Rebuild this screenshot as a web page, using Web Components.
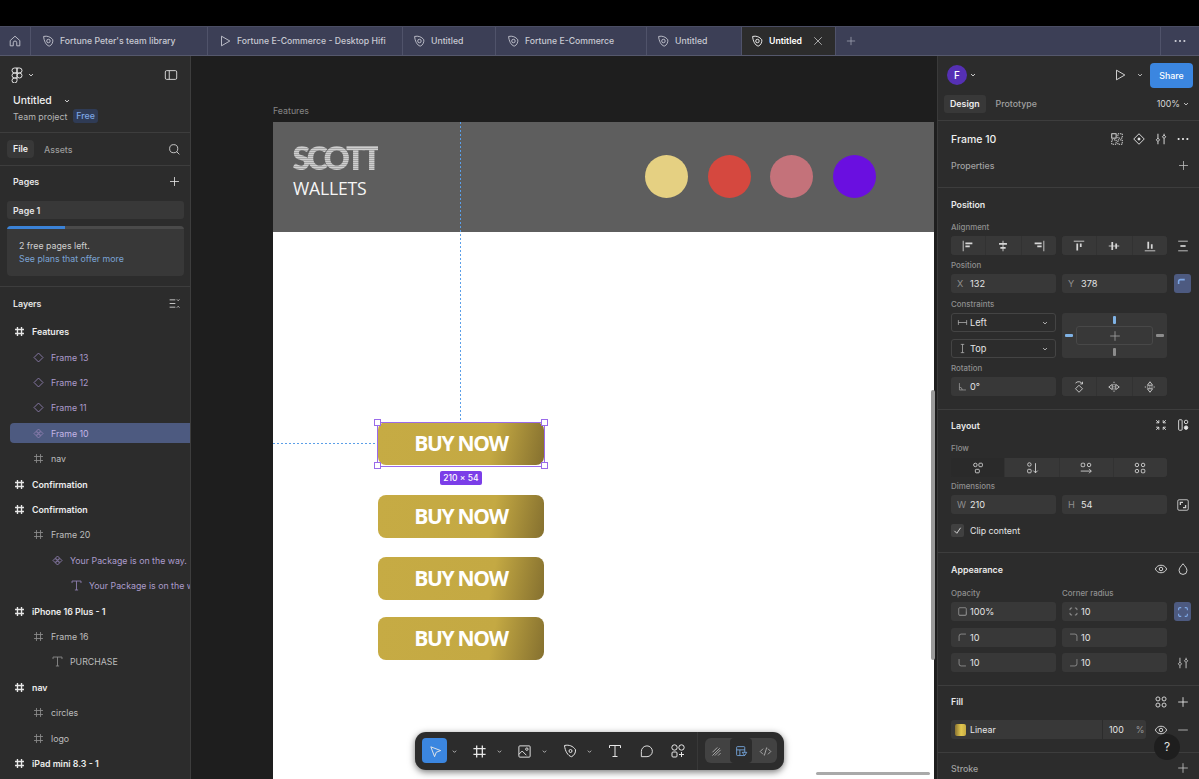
<!DOCTYPE html>
<html>
<head>
<meta charset="utf-8">
<title>Untitled</title>
<style>
    html, body { margin: 0; height: 100%; background: #000; overflow: hidden; }
    body { font-family: Inter, "Liberation Sans", sans-serif; font-size: 8.8px; color: #e6e6e6; }
    fig-app { height: 100vh; }
</style>
</head>
<body>
<fig-app></fig-app>

<script>
const ICONS = {
    home: '<path d="M2.500 7.500 8 2.500l5.500 5V13.500H10V10a2 2 0 0 0-4 0v3.500H2.500z"/>',
    draft: '<path d="M3 2.800c4-1 8 .4 10.500 3.700.5 3-1.500 6.700-4 7.300C5.800 13.300 3.300 7.500 3 2.800z"/><circle cx="8.500" cy="8" r="2"/>',
    play: '<path d="M4 2.500 13.500 8 4 13.500z" stroke-linejoin="round"/>',
    plus: '<path d="M8 2.500v11M2.500 8h11"/>',
    x: '<path d="M3 3l10 10M13 3 3 13"/>',
    dots: '<g fill="currentColor" stroke="none"><circle cx="3" cy="8" r="1.200"/><circle cx="8" cy="8" r="1.200"/><circle cx="13" cy="8" r="1.200"/></g>',
    logo: '<path d="M8 1H5.500a2.500 2.500 0 0 0 0 5H8zM8 1h2.500a2.500 2.500 0 0 1 0 5H8zM8 6H5.500a2.500 2.500 0 0 0 0 5H8z"/><circle cx="10.500" cy="8.500" r="2.500"/><path d="M5.500 11H8v2.500A2.500 2.500 0 1 1 5.500 11z"/>',
    panel: '<rect x="1.500" y="3" width="13" height="10" rx="1.500"/><path d="M6 3v10"/>',
    chev: '<path d="M5 6.500 8 9.500l3-3" stroke-width="1.500"/>',
    search: '<circle cx="7" cy="7" r="5"/><path d="M10.700 10.700 14 14"/>',
    collapse: '<path d="M2 3.500h7M2 8h7M2 12.500h7M11 3l1.500 1.500L14 3M11 13l1.500-1.500L14 13"/>',
    hash: '<path d="M5.500 2.500v11M10.500 2.500v11M2.500 5.500h11M2.500 10.500h11"/>',
    diamond: '<path d="M8 2.500 13.500 8 8 13.500 2.500 8z"/>',
    inst: '<path d="M8 2.500 10.500 5 8 7.500 5.500 5zM5 5.500 7.500 8 5 10.500 2.500 8zM11 5.500 13.500 8 11 10.500 8.500 8zM8 8.500l2.500 2.500L8 13.500 5.500 11z"/>',
    text: '<path d="M2.500 5V2.500h11V5M8 2.500v11M6 13.500h4"/>',
    compset: '<rect x="2" y="2" width="5" height="5"/><path stroke-dasharray="1.500 1" d="M9 2h5v5H9zM2 9h5v5H2zM9 9h5v5H9z"/>',
    diadot: '<path d="M8 2 14 8 8 14 2 8z"/><circle cx="8" cy="8" r="1.200" fill="currentColor"/>',
    sliders: '<path d="M4.500 2v5M4.500 11v3M11.500 2v1.500M11.500 7.500V14"/><path d="M4.500 7 6.300 9 4.500 11 2.700 9zM11.500 3.500l1.800 2-1.800 2-1.800-2z"/>',
    al: '<path d="M2.500 2v12"/><path d="M5 5h8M5 8.500h5" stroke-width="2"/>',
    ac: '<path d="M8 2v12"/><path d="M3.500 5.500h9M5 10h6" stroke-width="2"/>',
    ar: '<path d="M13.500 2v12"/><path d="M3 5h8M6 8.500h5" stroke-width="2"/>',
    at: '<path d="M2 2.500h12"/><path d="M6 5v8M10 5v4" stroke-width="2"/>',
    am: '<path d="M2 8h12"/><path d="M6 3.500v9M10.500 5v6" stroke-width="2"/>',
    ab: '<path d="M2 13.500h12"/><path d="M6 3v8M10 6v5" stroke-width="2"/>',
    dist: '<path d="M2.500 2.500h11M2.500 13.500h11"/><path d="M5 8h6" stroke-width="2"/>',
    corner: '<path d="M3 8V5a2 2 0 0 1 2-2h5" stroke-width="1.800"/>',
    width: '<path d="M2 4.500v7M14 4.500v7M2 8h12"/>',
    height: '<path d="M5.500 2h5M5.500 14h5M8 2v12"/>',
    angle: '<path d="M3.500 3v10H13M3.500 9a4 4 0 0 1 4 4"/>',
    rot: '<path d="M4 3.500a5 5 0 0 1 8 1M12 2v2.500H9.500"/><path d="M8 6.500 12 10.500 8 14.500 4 10.500z" transform="translate(0 -.5)"/>',
    fliph: '<path d="M8 2v12" stroke-dasharray="1.500 1"/><path d="M6 5v6L2 8zM10 5v6l4-3z"/>',
    flipv: '<path d="M2 8h12" stroke-dasharray="1.500 1"/><path d="M5 6h6L8 2zM5 10h6l-3 4z"/>',
    fit: '<path d="M2.500 5.500h3v-3M13.500 5.500h-3v-3M2.500 10.500h3v3M13.500 10.500h-3v3M2.500 2.500l3 3M13.500 2.500l-3 3M2.500 13.500l3-3M13.500 13.500l-3-3"/>',
    autol: '<rect x="3" y="2" width="4" height="12" rx="1"/><circle cx="11.500" cy="4.500" r="2"/><circle cx="11.500" cy="11" r="2" fill="currentColor"/>',
    fl1: '<circle cx="5" cy="4.500" r="2"/><rect x="9" y="2.500" width="4" height="4" rx="1"/><rect x="5" y="9.500" width="4.500" height="4" rx="1"/>',
    fl2: '<circle cx="5" cy="4" r="2"/><rect x="3" y="9.500" width="4" height="4" rx="1"/><path d="M12 2.500v11M9.500 11l2.500 2.500 2.500-2.500"/>',
    fl3: '<rect x="2.500" y="2.500" width="4" height="4" rx="1"/><circle cx="11.500" cy="4.500" r="2"/><path d="M2 11.500h12M11.500 9l2.500 2.500-2.500 2.500"/>',
    fl4: '<circle cx="4.500" cy="4.500" r="2"/><circle cx="11.500" cy="4.500" r="2"/><circle cx="4.500" cy="11.500" r="2"/><rect x="9.500" y="9.500" width="4" height="4" rx="1"/>',
    resize: '<rect x="2" y="2" width="12" height="12" rx="1.500"/><path d="M5 8V5h3M11 8v3H8" stroke-width="1.500"/>',
    check: '<path d="M3.500 8.500 7 12l5.500-8" stroke-width="1.300"/>',
    eye: '<path d="M1.500 8C3 5 5.300 3.700 8 3.700S13 5 14.500 8C13 11 10.700 12.300 8 12.300S3 11 1.500 8z"/><circle cx="8" cy="8" r="2"/>',
    drop: '<path d="M8 2c2.500 3 4.500 5.200 4.500 7.700a4.500 4.500 0 0 1-9 0C3.500 7.200 5.500 5 8 2z"/>',
    opac: '<rect x="2.500" y="2.500" width="11" height="11" rx="1.500"/><path d="M2.500 13.500h11V8" opacity=".5"/>',
    radius: '<path d="M3 6V4.500A1.500 1.500 0 0 1 4.500 3H6M10 3h1.500A1.500 1.500 0 0 1 13 4.500V6M13 10v1.500a1.500 1.500 0 0 1-1.500 1.500H10M6 13H4.500A1.500 1.500 0 0 1 3 11.500V10" stroke-width="1.300"/>',
    rtl: '<path d="M3 13V6a3 3 0 0 1 3-3h7"/>',
    rtr: '<path d="M3 3h7a3 3 0 0 1 3 3v7"/>',
    rbl: '<path d="M3 3v7a3 3 0 0 0 3 3h7"/>',
    rbr: '<path d="M13 3v7a3 3 0 0 1-3 3H3"/>',
    style: '<circle cx="4.500" cy="4.500" r="2.300"/><circle cx="11.500" cy="4.500" r="2.300"/><circle cx="4.500" cy="11.500" r="2.300"/><circle cx="11.500" cy="11.500" r="2.300"/>',
    minus: '<path d="M2.500 8h11"/>',
    cursor: '<path d="M3 3l10.500 4-4.700 1.800L7 13.500z" stroke-linejoin="round"/>',
    frame: '<path d="M5 1.500v13M11 1.500v13M1.500 5h13M1.500 11h13" stroke-width="1.400"/>',
    image: '<rect x="2" y="2" width="12" height="12" rx="1"/><circle cx="10.500" cy="5.500" r="1.300"/><path d="M2 11l3.500-3.500L10 12"/>',
    pen: '<path d="M2.500 2.500c4.500-1 8.500.5 11 4.200.4 3-1.500 6-4 7C6 13 3 8 2.500 2.500z"/><circle cx="8.500" cy="8" r="1.500"/>',
    bigt: '<path d="M2.500 5V2.500h11V5M8 2.500v11M5.500 13.500h5"/>',
    bubble: '<path d="M8.500 2a5.700 5.700 0 0 1 0 11.500H2.500V8A6 6 0 0 1 8.500 2z" stroke-linejoin="round"/>',
    plugins: '<circle cx="4.500" cy="4.500" r="2.700"/><circle cx="11.500" cy="4.500" r="2.700"/><rect x="2" y="9" width="5" height="5" rx="1"/><path d="M11.500 9v5M9 11.500h5"/>',
    draw: '<path d="M3 9l6-6M3 13l9-9M6 13l7-7M10 13l3-3"/>',
    dev: '<rect x="2" y="2" width="10" height="11" rx="1"/><path d="M2 6h10M6 6v7"/><path d="M9 9h5.500l-2.700 4z" fill="#2c2c2c"/>',
    code: '<path d="M5 4.500 1.500 8 5 11.500M11 4.500 14.500 8 11 11.500M9.500 3 6.500 13"/>',
};

// small base class, renders into an open shadow root once attributes are known
class FigElement extends HTMLElement {
    connectedCallback() {
        if (this.shadowRoot) return;
        this.attachShadow({ mode: 'open' }).innerHTML = this.render();
    }
}

class FigIcon extends FigElement {
    render() {
        const s = this.getAttribute('s') || 14;
        const w = this.getAttribute('w') || 1;
        return `<style>:host{display:inline-flex;flex:none;width:${s}px;height:${s}px}svg{display:block}</style>
        <svg width="${s}" height="${s}" viewBox="0 0 16 16" fill="none" stroke="currentColor" stroke-width="${w}">${ICONS[this.getAttribute('n')] || ''}</svg>`;
    }
}
customElements.define('fig-icon', FigIcon);

class FigTab extends FigElement {
    render() {
        const active = this.hasAttribute('active');
        return `<style>
            :host{display:flex;align-items:center;height:100%;box-sizing:border-box;padding-left:${this.getAttribute('pad') || 9}px;width:${this.getAttribute('width')}px;border-right:1px solid #50536a;color:#c9cad3;font-weight:500;gap:5px;flex:none}
            :host([active]){background:#2c2c2c;color:#fff;font-weight:600}
            .x{margin-left:5px;color:#d0d0d0}
            span{white-space:nowrap}
        </style>
        <fig-icon n="${this.getAttribute('icon')}" s="14"></fig-icon><span><slot></slot></span>
        ${active ? '<fig-icon class="x" n="x" s="12"></fig-icon>' : ''}`;
    }
}
customElements.define('fig-tab', FigTab);

class FigTabbar extends FigElement {
    render() {
        return `<style>
            :host{display:flex;height:30px;box-sizing:border-box;background:#3c3f56;border-top:1px solid #4a4d63;border-bottom:1px solid #55586c;font-size:8.7px}
            .home{width:31px;box-sizing:border-box;display:flex;align-items:center;justify-content:center;color:#c9cad3;border-right:1px solid #50536a}
            .add{width:30px;display:flex;align-items:center;justify-content:center;color:#a3a5b4}
            .fill{flex:1}
            .more{width:38px;display:flex;align-items:center;justify-content:center;border-left:1px solid #50536a;color:#d0d1da}
        </style>
        <div class="home"><fig-icon n="home" s="14"></fig-icon></div>
        <fig-tab icon="draft" width="177" pad="10">Fortune Peter's team library</fig-tab>
        <fig-tab icon="play" width="195" pad="10">Fortune E-Commerce - Desktop Hifi</fig-tab>
        <fig-tab icon="draft" width="93" pad="9">Untitled</fig-tab>
        <fig-tab icon="draft" width="151" pad="10">Fortune E-Commerce</fig-tab>
        <fig-tab icon="draft" width="95" pad="9">Untitled</fig-tab>
        <fig-tab icon="draft" width="94" pad="8" active>Untitled</fig-tab>
        <div class="add"><fig-icon n="plus" s="12"></fig-icon></div>
        <div class="fill"></div>
        <div class="more"><fig-icon n="dots" s="14"></fig-icon></div>`;
    }
}
customElements.define('fig-tabbar', FigTabbar);

class FigLayer extends FigElement {
    render() {
        const lvl = +this.getAttribute('level') || 0;
        const kind = this.getAttribute('kind') || 'hash';
        const tone = this.hasAttribute('purple') ? '#ab9bcb' : lvl === 0 ? '#ececec' : '#bdbdbd';
        return `<style>
            :host{display:block;height:25.41px;padding:2.7px 0;box-sizing:border-box;font-weight:${lvl === 0 ? 600 : 400};font-size:8.8px}
            .row{height:20px;margin-left:10px;display:flex;align-items:center;white-space:nowrap;overflow:hidden;color:${tone};border-radius:4px 0 0 4px;padding-left:${3 + lvl * 19}px}
            :host([selected]) .row{background:#4d5a80;color:#c3b5e6}
            fig-icon{color:${lvl === 0 ? '#e8e8e8' : this.hasAttribute('purple') ? '#8f7fb0' : '#8b8b8b'};margin-right:6px}
        </style>
        <div class="row"><fig-icon n="${kind}" s="13" w="${lvl === 0 ? 1.7 : 1.1}"></fig-icon><slot></slot></div>`;
    }
}
customElements.define('fig-layer', FigLayer);

class FigLeftPanel extends FigElement {
    render() {
        return `<style>
            :host{display:block;background:#2c2c2c;border-right:1px solid #3d3d3d;overflow:hidden;color:#e6e6e6;font-size:8.8px}
            .logo{height:38px;display:flex;align-items:center;padding:0 12px 0 9px}
            .logo .fill{flex:1}
            .title{height:13px;margin-left:13px;display:flex;align-items:center;font-size:10.4px;font-weight:500;color:#efefef}
            .title fig-icon{margin-left:10px}
            .proj{height:16px;margin:1px 0 8px 13px;display:flex;align-items:center;gap:6px;color:#b5b5b5}
            .badge{background:#2f3b55;color:#7ea7e4;border-radius:3px;padding:1px 3px;font-weight:500;line-height:12px}
            .tabs{height:32px;border-top:1px solid #3d3d3d;border-bottom:1px solid #3d3d3d;display:flex;align-items:center;padding:0 9px 0 7px}
            .chip{background:#383838;border-radius:4px;height:18px;line-height:18px;padding:0 6px;font-weight:600;color:#eee}
            .dim{color:#9b9b9b;margin-left:10px;font-weight:500}
            .fill{flex:1}
            .head{height:32px;display:flex;align-items:center;padding:0 9px 0 13px;font-weight:600;color:#e6e6e6}
            .pages{height:31px}
            .page{margin:4px 6px 0 7px;height:18px;line-height:19px;background:#383838;border-radius:3px;padding-left:6px;font-weight:600}
            .card{margin:7px 6px 10px 7px;height:50px;background:#383838;border-radius:4px;overflow:hidden;box-sizing:border-box;line-height:13px;color:#d0d0d0}
            .bar{height:3px;background:#4a4a4a;margin-bottom:10px}
            .bar div{height:3px;width:58px;background:#3b82d6}
            .card p{margin:0 0 0 12px}
            .card a{color:#7ba3d4}
            .layers{border-top:1px solid #3d3d3d}
        </style>
        <div class="logo"><fig-icon n="logo" s="16"></fig-icon><fig-icon n="chev" s="10" style="margin-left:1px"></fig-icon><div class="fill"></div><fig-icon n="panel" s="14"></fig-icon></div>
        <div class="title">Untitled<fig-icon n="chev" s="10"></fig-icon></div>
        <div class="proj">Team project <span class="badge">Free</span></div>
        <div class="tabs"><div class="chip">File</div><div class="dim">Assets</div><div class="fill"></div><fig-icon n="search" s="13"></fig-icon></div>
        <div class="head pages">Pages<div class="fill"></div><fig-icon n="plus" s="13"></fig-icon></div>
        <div class="page">Page 1</div>
        <div class="card"><div class="bar"><div></div></div><p>2 free pages left.</p><p><a>See plans that offer more</a></p></div>
        <div class="layers">
            <div class="head">Layers<div class="fill"></div><fig-icon n="collapse" s="13"></fig-icon></div>
            <fig-layer>Features</fig-layer>
            <fig-layer level="1" kind="diamond" purple>Frame 13</fig-layer>
            <fig-layer level="1" kind="diamond" purple>Frame 12</fig-layer>
            <fig-layer level="1" kind="diamond" purple>Frame 11</fig-layer>
            <fig-layer level="1" kind="inst" purple selected>Frame 10</fig-layer>
            <fig-layer level="1">nav</fig-layer>
            <fig-layer>Confirmation</fig-layer>
            <fig-layer>Confirmation</fig-layer>
            <fig-layer level="1">Frame 20</fig-layer>
            <fig-layer level="2" kind="inst" purple>Your Package is on the way.</fig-layer>
            <fig-layer level="3" kind="text" purple>Your Package is on the way.</fig-layer>
            <fig-layer>iPhone 16 Plus - 1</fig-layer>
            <fig-layer level="1">Frame 16</fig-layer>
            <fig-layer level="2" kind="text">PURCHASE</fig-layer>
            <fig-layer>nav</fig-layer>
            <fig-layer level="1">circles</fig-layer>
            <fig-layer level="1">logo</fig-layer>
            <fig-layer>iPad mini 8.3 - 1</fig-layer>
        </div>`;
    }
}
customElements.define('fig-left-panel', FigLeftPanel);

class FigBuyButton extends FigElement {
    render() {
        return `<style>
            :host{position:absolute;left:105px;top:${this.getAttribute('top')}px;width:166px;height:43px;box-sizing:border-box;padding-bottom:2px;border-radius:8px;display:flex;align-items:center;justify-content:center;
              background:linear-gradient(101deg,#c6ab44 0%,#c4a943 68%,#85702f 100%);color:#fff;font:700 21px "Open Sans","Noto Sans",sans-serif;letter-spacing:-1.3px;white-space:nowrap}
        </style><slot></slot>`;
    }
}
customElements.define('fig-buy-button', FigBuyButton);

class FigToolbar extends FigElement {
    render() {
        const tool = (n, s, x) => `<fig-icon n="${n}" s="${s}" style="position:absolute;left:${x - s / 2}px;top:${19 - s / 2}px"></fig-icon>`;
        const chev = x => `<fig-icon n="chev" s="9" style="position:absolute;left:${x - 4.500}px;top:14.500px;color:#c8c8c8"></fig-icon>`;
        return `<style>
            :host{position:absolute;left:224px;top:676px;width:369px;height:38px;background:#2c2c2c;border-radius:11px;box-shadow:0 2px 7px rgba(0,0,0,.55);color:#e8e8e8}
            .sel{position:absolute;left:7px;top:6px;width:25px;height:25px;border-radius:4px;background:#3b86e0}
            .mode{position:absolute;left:290px;top:6px;width:72px;height:25px;border-radius:6px;background:#424242}
            .dev{position:absolute;left:315px;top:6px;width:22px;height:25px;background:#2c2c2c;border-radius:4px}
            .div{position:absolute;left:282px;top:0;bottom:0;width:1px;background:#383838}
        </style>
        <div class="sel"></div><div class="div"></div><div class="mode"></div><div class="dev"></div>
        ${tool('cursor', 15, 20)}${chev(39)}${tool('frame', 15, 64)}${chev(84)}${tool('image', 15, 109)}${chev(129)}
        ${tool('pen', 16, 155)}${chev(174)}${tool('bigt', 16, 200)}${tool('bubble', 15, 231)}${tool('plugins', 16, 263)}
        <fig-icon n="draw" s="13" style="position:absolute;left:295px;top:12.500px;color:#bcbcbc"></fig-icon>
        <fig-icon n="dev" s="13" style="position:absolute;left:319.500px;top:12.500px;color:#7db2ec"></fig-icon>
        <fig-icon n="code" s="13" style="position:absolute;left:343.500px;top:12.500px;color:#bcbcbc"></fig-icon>`;
    }
}
customElements.define('fig-toolbar', FigToolbar);

class FigCanvas extends FigElement {
    render() {
        const circle = (x, c) => `<div style="position:absolute;left:${x}px;top:33px;width:43px;height:43px;border-radius:50%;background:${c}"></div>`;
        const hnd = (x, y) => `<div class="hnd" style="left:${x}px;top:${y}px"></div>`;
        return `<style>
            :host{display:block;position:relative;background:#1e1e1e;overflow:hidden}
            .name{position:absolute;left:82px;top:48px;font-size:8.8px;line-height:13px;color:#858585}
            .frame{position:absolute;left:82px;top:66px;width:661px;height:720px;background:#fff}
            .head{position:absolute;left:0;top:0;right:0;height:110px;background:#5e5e5e}
            .scott{position:absolute;left:19.500px;top:18px;font:800 32px/36px Lato,"Open Sans",sans-serif;letter-spacing:-3.400px;color:transparent;
              background:repeating-linear-gradient(0deg,#cfcfcf 0 1px,#a8a8a8 1px 2px);-webkit-background-clip:text;background-clip:text}
            .wallets{position:absolute;left:20px;top:53px;font:400 17.600px/26px "Open Sans",sans-serif;letter-spacing:-.2px;color:#f5f5f5}
            .vg{position:absolute;left:269px;top:66px;width:1px;height:300px;background:repeating-linear-gradient(180deg,#5b9fe8 0 2px,transparent 2px 4px)}
            .hg{position:absolute;left:82px;top:387px;width:104px;height:1px;background:repeating-linear-gradient(90deg,#5b9fe8 0 2px,transparent 2px 4px)}
            .sel{position:absolute;left:186px;top:366px;width:166px;height:43px;border:1px solid #9a6bea;border-radius:1px}
            .hnd{position:absolute;width:5px;height:5px;background:#fff;border:1px solid #9a6bea}
            .size{position:absolute;left:249px;top:415px;width:42px;height:14px;border-radius:2px;background:#7b3ee8;color:#fff;font-size:8.500px;font-weight:500;line-height:14px;text-align:center;white-space:nowrap}
            .vs{position:absolute;left:740px;top:334px;width:4px;height:270px;background:#9a9a9a;border-radius:2px}
            .hs{position:absolute;left:625px;top:716px;width:114px;height:3px;background:#a9a9a9;border-radius:2px}
        </style>
        <div class="name">Features</div>
        <div class="frame">
            <div class="head">
                <div class="scott">SCOTT</div>
                <div class="wallets">WALLETS</div>
                ${circle(372, '#e5d082')}${circle(435, '#d5483f')}${circle(497, '#c4727a')}${circle(560, '#6a0fe0')}
            </div>
            <fig-buy-button top="300">BUY NOW</fig-buy-button>
            <fig-buy-button top="373">BUY NOW</fig-buy-button>
            <fig-buy-button top="435">BUY NOW</fig-buy-button>
            <fig-buy-button top="495">BUY NOW</fig-buy-button>
        </div>
        <div class="vg"></div><div class="hg"></div>
        <div class="sel"></div>
        ${hnd(183, 363)}${hnd(350, 363)}${hnd(183, 406)}${hnd(350, 406)}
        <div class="size">210 × 54</div>
        <div class="vs"></div><div class="hs"></div>
        <fig-toolbar></fig-toolbar>`;
    }
}
customElements.define('fig-canvas', FigCanvas);

class FigTitle extends FigElement {
    render() {
        const h = this.getAttribute('h') || 32;
        return `<style>
            :host{display:flex;align-items:center;height:${h}px;font-weight:600;font-size:8.8px;color:#e8e8e8;margin-right:2px}
            :host([dim]){color:#a0a0a0;font-weight:500}
            :host([big]){font-size:10.500px;font-weight:500;color:#f0f0f0}
            .fill{flex:1}
            ::slotted(fig-icon){margin-left:8px}
        </style><span>${this.getAttribute('label')}</span><div class="fill"></div><slot></slot>`;
    }
}
customElements.define('fig-title', FigTitle);

class FigLabel extends FigElement {
    render() {
        return `<style>:host{display:block;height:14px;line-height:14px;font-size:7.900px;font-weight:500;color:#8f8f8f;white-space:nowrap}</style><slot></slot>`;
    }
}
customElements.define('fig-label', FigLabel);

class FigField extends FigElement {
    render() {
        const icon = this.getAttribute('icon');
        const pre = this.getAttribute('pre');
        return `<style>
            :host{display:flex;align-items:center;height:19px;box-sizing:border-box;background:#383838;border-radius:3px;padding-left:6px;color:#e4e4e4;font-size:9.200px}
            .pre{width:13px;flex:none;color:#8f8f8f;display:flex;align-items:center}
            fig-icon{color:#a8a8a8}
        </style><div class="pre">${icon ? `<fig-icon n="${icon}" s="11"></fig-icon>` : pre || ''}</div><slot></slot>`;
    }
}
customElements.define('fig-field', FigField);

class FigSelect extends FigElement {
    render() {
        return `<style>
            :host{display:flex;align-items:center;height:19px;box-sizing:border-box;border:1px solid #444;border-radius:3px;padding:0 5px;color:#e4e4e4;font-size:9.200px}
            fig-icon{color:#c0c0c0}
            .pre{width:13px;display:flex}
            .fill{flex:1}
        </style><div class="pre"><fig-icon n="${this.getAttribute('icon')}" s="11"></fig-icon></div><slot></slot><div class="fill"></div><fig-icon n="chev" s="10"></fig-icon>`;
    }
}
customElements.define('fig-select', FigSelect);

// row of joined icon buttons
class FigGroup extends FigElement {
    render() {
        const on = this.getAttribute('on');
        const btn = this.getAttribute('icons').split(' ').map((n, i) =>
            `<div class="b${String(i) === on ? ' on' : ''}"><fig-icon n="${n}" s="14"></fig-icon></div>`).join('');
        return `<style>
            :host{display:flex;gap:1px;height:19px;border-radius:3px;overflow:hidden;background:#323232}
            .b{flex:1;background:#383838;display:flex;align-items:center;justify-content:center;color:#d6d6d6}
            .on{background:#2a2a2a}
        </style>${btn}`;
    }
}
customElements.define('fig-group', FigGroup);

class FigConstraintBox extends FigElement {
    render() {
        return `<style>
            :host{display:grid;grid-template-columns:14px 1fr 14px;grid-template-rows:13px 19px 13px;background:#383838;border-radius:3px;place-items:center}
            .mid{justify-self:stretch;align-self:stretch;border:1px solid #484848;border-radius:3px;display:flex;align-items:center;justify-content:center;color:#9a9a9a}
            .v{width:2.500px;height:8px;background:#8c8c8c;border-radius:1px}
            .h{width:8px;height:2.500px;background:#8c8c8c;border-radius:1px}
            .blue{background:#7fb2e5}
        </style>
        <i></i><div class="v blue"></div><i></i>
        <div class="h blue"></div><div class="mid"><fig-icon n="plus" s="14"></fig-icon></div><div class="h"></div>
        <i></i><div class="v"></div><i></i>`;
    }
}
customElements.define('fig-constraint-box', FigConstraintBox);

class FigRow extends FigElement {
    render() {
        return `<style>
            :host{display:grid;grid-template-columns:105px 105px 18px;column-gap:6px;margin-top:${this.getAttribute('mt') || 0}px}
            ::slotted(:nth-child(3)){margin-left:1px}
        </style><slot></slot>`;
    }
}
customElements.define('fig-row', FigRow);

class FigSection extends FigElement {
    render() {
        return `<style>:host{display:block;padding:0 7px 13px 13px;border-bottom:1px solid #3d3d3d}</style><slot></slot>`;
    }
}
customElements.define('fig-section', FigSection);

class FigRightPanel extends FigElement {
    render() {
        return `<style>
            :host{display:block;background:#2c2c2c;overflow:hidden;position:relative;border-left:1px solid #3a3a3a;color:#e6e6e6;font-size:8.8px;box-sizing:border-box}
            .top{height:38px;display:flex;align-items:center;padding:0 6px 0 9px}
            .avatar{width:20px;height:20px;border-radius:50%;background:#5530b4;color:#fff;display:flex;align-items:center;justify-content:center;font-weight:500;font-size:10px}
            .fill{flex:1}
            .share{width:43px;height:25px;background:#3b86e0;border-radius:4px;color:#fff;text-align:center;line-height:25px;font-weight:500;margin-left:5px}
            .tabs{height:25px;border-bottom:1px solid #3d3d3d;display:flex;align-items:flex-start;padding:1px 8px 0 6px}
            .chip{height:18px;line-height:18px;padding:0 6px;background:#383838;border-radius:3px;font-weight:600;color:#eee}
            .dim{margin-left:10px;line-height:18px;color:#a0a0a0;font-weight:500}
            .zoom{line-height:18px;display:flex;align-items:center;gap:1px;color:#d6d6d6}
            .acc{background:#4d5a80;color:#7ea7e4;border-radius:3px;height:19px;display:flex;align-items:center;justify-content:center}
            .plain{display:flex;align-items:center;justify-content:center;color:#d0d0d0}
            .stack{display:flex;flex-direction:column;gap:7px}
            .clip{display:flex;align-items:center;height:18px;margin-top:7px;gap:6px}
            .box{width:13px;height:13px;background:#404040;border-radius:2px;display:flex;align-items:center;justify-content:center}
            .cols{display:grid;grid-template-columns:105px 105px;column-gap:6px}
            .fill-row{display:flex;height:19px;align-items:center}
            .paint{width:151px;height:19px;background:#383838;border-radius:3px 0 0 3px;display:flex;align-items:center;padding-left:4px;box-sizing:border-box;gap:4px}
            .sw{width:11px;height:12px;border-radius:2px;background:linear-gradient(90deg,#8a7331,#e3c84f 55%,#c6ab44)}
            .pct{width:43px;height:19px;background:#383838;margin-left:1px;border-radius:0 3px 3px 0;display:flex;align-items:center;box-sizing:border-box;padding-left:6px;gap:12px}
            .pct span{color:#9a9a9a}
            .help{position:absolute;left:216px;top:678px;width:26px;height:26px;border-radius:50%;background:#1e1e1e;color:#e0e0e0;font-size:12px;line-height:26px;text-align:center}
            .stroke{padding:0 7px 0 13px}
        </style>
        <div class="top">
            <div class="avatar">F</div><fig-icon n="chev" s="10" style="margin-left:1px"></fig-icon><div class="fill"></div>
            <fig-icon n="play" s="14"></fig-icon><fig-icon n="chev" s="10" style="margin-left:8px;color:#ccc"></fig-icon>
            <div class="share">Share</div>
        </div>
        <div class="tabs"><div class="chip">Design</div><div class="dim">Prototype</div><div class="fill"></div><div class="zoom">100%<fig-icon n="chev" s="10"></fig-icon></div></div>
        <fig-section style="height:66px;box-sizing:content-box;padding-bottom:0">
            <fig-title big h="36" label="Frame 10"><fig-icon n="compset" s="14"></fig-icon><fig-icon n="diadot" s="14"></fig-icon><fig-icon n="sliders" s="14"></fig-icon><fig-icon n="dots" s="14"></fig-icon></fig-title>
            <fig-title h="16" dim label="Properties"><fig-icon n="plus" s="13" style="color:#bbb"></fig-icon></fig-title>
        </fig-section>
        <fig-section>
            <fig-title label="Position"></fig-title>
            <fig-label>Alignment</fig-label>
            <fig-row mt="2"><fig-group icons="al ac ar"></fig-group><fig-group icons="at am ab"></fig-group><div class="plain"><fig-icon n="dist" s="14"></fig-icon></div></fig-row>
            <fig-label style="margin-top:3px">Position</fig-label>
            <fig-row mt="2"><fig-field pre="X">132</fig-field><fig-field pre="Y">378</fig-field><div class="acc"><fig-icon n="corner" s="14"></fig-icon></div></fig-row>
            <fig-label style="margin-top:4px">Constraints</fig-label>
            <fig-row mt="2">
                <div class="stack"><fig-select icon="width">Left</fig-select><fig-select icon="height">Top</fig-select></div>
                <fig-constraint-box></fig-constraint-box>
            </fig-row>
            <fig-label style="margin-top:3px">Rotation</fig-label>
            <fig-row mt="2"><fig-field icon="angle">0°</fig-field><fig-group icons="rot fliph flipv"></fig-group></fig-row>
        </fig-section>
        <fig-section>
            <fig-title h="30" label="Layout"><fig-icon n="fit" s="14"></fig-icon><fig-icon n="autol" s="14"></fig-icon></fig-title>
            <fig-label style="margin-top:1px">Flow</fig-label>
            <fig-group style="margin-top:3px;width:216px" icons="fl1 fl2 fl3 fl4" on="0"></fig-group>
            <fig-label style="margin-top:2px">Dimensions</fig-label>
            <fig-row mt="2"><fig-field pre="W">210</fig-field><fig-field pre="H">54</fig-field><div class="plain"><fig-icon n="resize" s="14"></fig-icon></div></fig-row>
            <div class="clip"><div class="box"><fig-icon n="check" s="11"></fig-icon></div><span>Clip content</span></div>
        </fig-section>
        <fig-section>
            <fig-title label="Appearance"><fig-icon n="eye" s="14"></fig-icon><fig-icon n="drop" s="14"></fig-icon></fig-title>
            <div class="cols" style="margin-top:1px"><fig-label>Opacity</fig-label><fig-label>Corner radius</fig-label></div>
            <fig-row mt="2"><fig-field icon="opac">100%</fig-field><fig-field icon="radius">10</fig-field><div class="acc"><fig-icon n="radius" s="14"></fig-icon></div></fig-row>
            <fig-row mt="7"><fig-field icon="rtl">10</fig-field><fig-field icon="rtr">10</fig-field></fig-row>
            <fig-row mt="6"><fig-field icon="rbl">10</fig-field><fig-field icon="rbr">10</fig-field><div class="plain"><fig-icon n="sliders" s="14"></fig-icon></div></fig-row>
        </fig-section>
        <fig-section>
            <fig-title h="31" label="Fill"><fig-icon n="style" s="14"></fig-icon><fig-icon n="plus" s="14"></fig-icon></fig-title>
            <div class="fill-row" style="margin-top:3px">
                <div class="paint"><div class="sw"></div>Linear</div>
                <div class="pct">100<span>%</span></div>
                <fig-icon n="eye" s="14" style="margin-left:8px"></fig-icon><fig-icon n="minus" s="14" style="margin-left:8px;color:#bbb"></fig-icon>
            </div>
        </fig-section>
        <div class="stroke"><fig-title h="30" dim label="Stroke"><fig-icon n="plus" s="14" style="color:#bbb"></fig-icon></fig-title></div>
        <div class="help">?</div>`;
    }
}
customElements.define('fig-right-panel', FigRightPanel);

class FigApp extends FigElement {
    render() {
        return `<style>
            :host{display:flex;flex-direction:column}
            .black{height:26px;background:#000;flex:none}
            .main{flex:1;display:grid;grid-template-columns:191px 746px 262px;min-height:0}
        </style>
        <div class="black"></div>
        <fig-tabbar></fig-tabbar>
        <div class="main"><fig-left-panel></fig-left-panel><fig-canvas></fig-canvas><fig-right-panel></fig-right-panel></div>`;
    }
}
customElements.define('fig-app', FigApp);
</script>
</body>
</html>
